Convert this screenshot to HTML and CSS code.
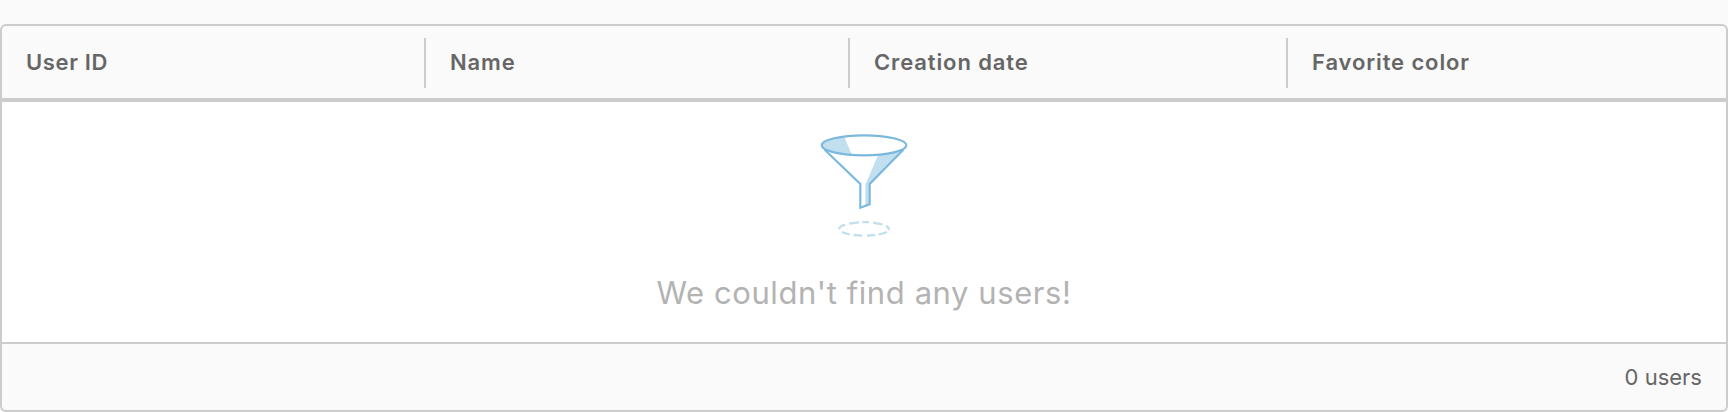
FILE: index.html
```html
<!DOCTYPE html>
<html lang="en">
<head>
<meta charset="utf-8">
<title>Users</title>
<link rel="stylesheet" href="styles.css">
</head>
<body>
<main class="datagrid">
  <header class="columns">
    <div class="column user-id"><span>User ID</span></div>
    <div class="column name"><span>Name</span></div>
    <div class="column created"><span>Creation date</span></div>
    <div class="column favorite"><span>Favorite color</span></div>
  </header>
  <section class="placeholder">
    <svg class="funnel" viewBox="0 0 384 390" fill="none" aria-hidden="true">
      <path class="shade" d="M133 51L156 105C110 102 65 94 65 76C65 63 98 54 133 51Z"/>
      <path class="shade" d="M234 106Q278 102 307 91L210 190V253L196 257V194Z"/>
      <ellipse class="line" cx="192" cy="76" rx="127" ry="30"/>
      <path class="line" d="M74 89L181 192V263L209 253V192L310 89"/>
      <path class="drop" d="M147 311L177 307M187 306.500H207M219 308L247 313M258 317Q267 322 267 330M261 336Q248 341 236 343M225 345L201 347M187 347L161 345M149 343Q133 340 126 336M118 328Q116 319 136 314"/>
    </svg>
    <p class="message">We couldn't find any users!</p>
  </section>
  <footer class="footer"><span>0 users</span></footer>
</main>
</body>
</html>
```
FILE: styles.css
```css
* { box-sizing: border-box; }
body {
  margin: 0;
  padding-top: 24px;
  height: 412px;
  background: #fafafa;
  color: #666;
  font-family: Inter, "Liberation Sans", sans-serif;
}
.datagrid {
  height: 388px;
  display: flex;
  flex-direction: column;
  border: 2px solid #ccc;
  border-radius: 6px;
  overflow: hidden;
}
.columns {
  display: grid;
  grid-template-columns: 422px 424px 438px 1fr;
  height: 76px;
  padding: 12px 0 10px;
  border-bottom: 4px solid #ccc;
}
.column {
  height: 50px;
  padding-left: 24px;
  font-size: 22px;
  line-height: 49px;
  font-weight: 600;
  letter-spacing: 0.88px;
}
.user-id { letter-spacing: 0.65px; }
.column + .column { border-left: 2px solid #ccc; }
.placeholder {
  flex: 1;
  display: flex;
  flex-direction: column;
  align-items: center;
  padding-top: 18px;
  background: #fff;
}
.funnel { width: 128px; height: 130px; flex: none; }
.shade { fill: #c2dfef; }
.line { stroke: #7ab9dd; stroke-width: 6.5; }
.drop { stroke: #c2dfef; stroke-width: 7; }
.message {
  margin: 23px 0 0;
  font-size: 31px;
  line-height: 40px;
  letter-spacing: 0.58px;
  color: #b3b3b3;
}
.footer {
  height: 68px;
  padding: 0 24px;
  border-top: 2px solid #ccc;
  text-align: right;
  font-size: 22px;
  line-height: 66px;
}
```
